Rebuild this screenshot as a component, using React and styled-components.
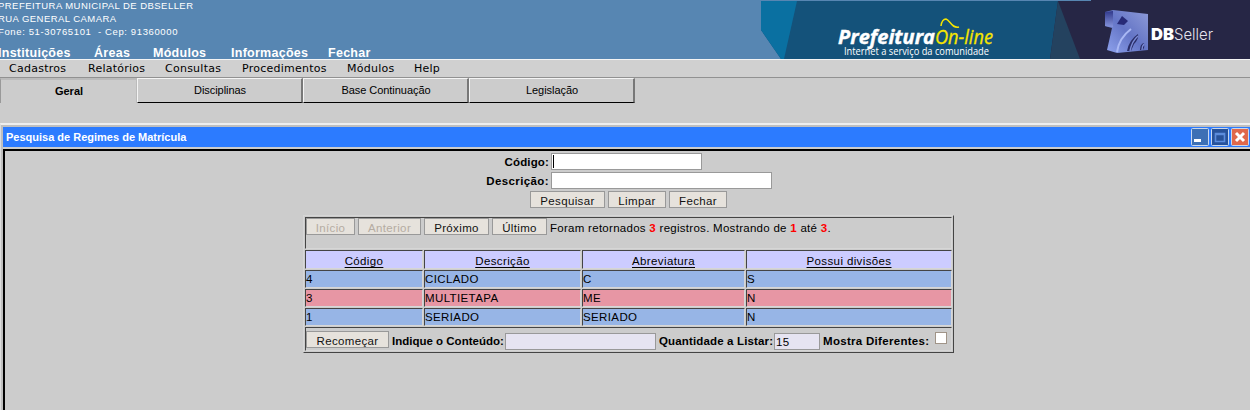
import React from 'react';
import styled, { createGlobalStyle } from 'styled-components';

const Global = createGlobalStyle`
  * { box-sizing: border-box; }
  body { margin: 0; background: #ccc; overflow: hidden; }
  body, input, button { font-family: "Liberation Sans", Arial, sans-serif; font-size: 11px; color: #000; }
`;

const Page = styled.div`
  width: 1250px;
  height: 410px;
  overflow: hidden;
  display: flex;
  flex-direction: column;
  background: #ccc;
`;

const Header = styled.header`
  height: 60px;
  flex: none;
  display: flex;
  justify-content: space-between;
  background: #5786b2;
  border-bottom: 1px solid #f4f4f4;
  color: #fff;
`;

const HeaderInfo = styled.div`
  display: flex;
  flex-direction: column;
  justify-content: space-between;
  margin-left: -2px;
`;

const Address = styled.div`
  margin-top: -1px;
  font-size: 9.5px;
  line-height: 13px;
  letter-spacing: 0.45px;
  white-space: pre;
`;

const Phone = styled.div`
  letter-spacing: 0.62px;
`;

const MainNav = styled.nav`
  display: flex;
  height: 15px;
  font-size: 12.5px;
  font-weight: bold;
  line-height: 18px;
  letter-spacing: 0.27px;
`;

const NavItem = styled.a`
  width: ${p => p.$w}px;
  white-space: nowrap;
`;

const MenuBar = styled.nav`
  height: 18px;
  flex: none;
  display: flex;
  padding-left: 9px;
  background: #d0d0d0;
  border-bottom: 1px solid #919191;
  font-family: "DejaVu Sans", sans-serif;
  letter-spacing: 0.25px;
  line-height: 17px;
`;

const Tabs = styled.div`
  display: flex;
  height: 45px;
  flex: none;
`;

const Tab = styled.div`
  width: 166px;
  height: 25px;
  padding-left: 1px;
  line-height: 23px;
  letter-spacing: -0.05px;
  text-align: center;
  border: solid;
  border-width: 1px 2px 1px 1px;
  border-color: #f4f4f4 #777 #000 #f4f4f4;
`;

const ActiveTab = styled(Tab)`
  width: 137px;
  line-height: 22px;
  letter-spacing: 0;
  font-weight: bold;
  border-width: 2px 1px 0 1px;
  border-color: #bbb #bbb #ccc #999;
`;

const Window = styled.section`
  flex: 1;
  display: flex;
  flex-direction: column;
  border-top: 2px solid #eee;
  border-left: 1px solid #ddd;
`;

const WindowFrame = styled.div`
  flex: 1;
  display: flex;
  flex-direction: column;
  border: 2px solid #bfbfbf;
  border-width: 2px 0 0 2px;
`;

const TitleBar = styled.div`
  height: 20px;
  flex: none;
  display: flex;
  justify-content: space-between;
  background: #2c7bff;
  color: #fff;
  font-weight: bold;
  line-height: 21px;
  padding: 0 1px 0 3px;
`;

const WindowButtons = styled.div`
  display: flex;
  padding-top: 1px;
  gap: 2px;
  svg { display: block; }
`;

const Content = styled.main`
  flex: 1;
  margin-top: 2px;
  border: solid #000;
  border-width: 2px 0 0 2px;
  padding-top: 2px;
`;

const FormRow = styled.div`
  display: flex;
  height: 17px;
  margin-bottom: 2px;
  align-items: stretch;
`;

const FormLabel = styled.label`
  width: 546px;
  padding-right: 2px;
  text-align: right;
  font-size: 11.5px;
  font-weight: bold;
  line-height: 18px;
  letter-spacing: ${p => p.$ls}px;
`;

const Field = styled.input`
  width: ${p => p.$w}px;
  height: 17px;
  padding: 0 1px;
  border: 1px solid #999;
  border-radius: 0;
  outline: none;
  background: ${p => p.$bg || '#fff'};
  font-size: 11.5px;
  letter-spacing: 0.3px;
`;

const FocusedField = styled.div`
  width: 151px;
  border: 1px solid #999;
  background: #fff;
  padding: 1px;
  &::before { content: ''; display: block; width: 1px; height: 13px; background: #000; }
`;

const Actions = styled.div`
  display: flex;
  gap: 3px;
  margin-left: 525px;
`;

const Button = styled.button`
  width: ${p => p.$w}px;
  height: 17px;
  padding: 4px 0 0;
  border: 1px solid #999;
  border-radius: 0;
  background: #e6e2dc;
  font-size: 11.5px;
  line-height: 11px;
  letter-spacing: 0.36px;
  white-space: nowrap;
  color: #111;
  &:disabled { color: #b5aca2; }
`;

const Grid = styled.div`
  width: 651px;
  height: 138px;
  margin: 7px 0 0 298px;
  display: grid;
  grid-template-columns: 118px 157px 163px 206px;
  grid-template-rows: 32px 19px 18px 18px 18px 24px;
  gap: 1px;
  padding: 1px;
  border: 1px solid;
  border-color: #d6d6d6 #444 #444 #d6d6d6;
`;

const Cell = styled.div`
  border: 1px solid;
  border-color: #444 #d6d6d6 #d6d6d6 #444;
  background: ${p => p.$bg};
  font-size: 11.5px;
  line-height: 17px;
  letter-spacing: 0.38px;
  white-space: nowrap;
`;

const HeadCell = styled(Cell)`
  background: #ccccff;
  text-align: center;
  line-height: 20px;
  text-decoration: underline;
  text-decoration-thickness: 1px;
  text-underline-offset: 2px;
  text-decoration-skip-ink: none;
`;

const BarCell = styled(Cell)`
  grid-column: 1 / -1;
  display: flex;
  align-items: flex-start;
`;

const Pager = styled.div`
  display: flex;
  gap: 3px;
`;

const Summary = styled.span`
  margin-left: 3px;
  line-height: 20px;
  letter-spacing: 0.28px;
  b { color: #f00; }
`;

const FooterCell = styled(BarCell)`
  padding-top: 3px;
`;

const FooterLabel = styled.label`
  flex: none;
  width: ${p => p.$w}px;
  padding-left: 3px;
  line-height: 21px;
  font-weight: bold;
  letter-spacing: ${p => p.$ls}px;
`;

const FooterField = styled(Field)`
  margin-top: 2px;
`;

const Check = styled.span`
  width: 12px;
  height: 12px;
  margin-top: 1px;
  margin-left: 4px;
  border: 1px solid #a09488;
  background: #fff;
`;

const Banner = () => (
  <svg width="490" height="59" viewBox="0 0 490 59">
    <defs>
      <linearGradient id="face" x1="0" y1="1" x2="1" y2="0">
        <stop offset="0" stopColor="#90a4ee" />
        <stop offset=".5" stopColor="#6475c6" />
        <stop offset="1" stopColor="#8e9bd8" />
      </linearGradient>
      <linearGradient id="side" x1="0" y1="0" x2="0" y2="1">
        <stop offset="0" stopColor="#30388a" />
        <stop offset="1" stopColor="#8594dc" />
      </linearGradient>
    </defs>
    <path d="M1 1H331V0H490V59H21L1 30Z" fill="#14527a" />
    <path d="M1 1H37L24 59H21L1 30Z" fill="#0a70a1" />
    <path d="M298 1L331 1V0H490V59H290Z" fill="#262645" />
    <path d="M298 1L320 59H290Z" fill="#24425f" />
    <text x="78" y="44" fill="#fff" stroke="#fff" strokeWidth=".4" fontFamily="Open Sans" fontWeight="700" fontStyle="italic" fontSize="19" textLength="97" lengthAdjust="spacingAndGlyphs">Prefeitura</text>
    <text x="175" y="44" fill="#f6e500" stroke="#f6e500" strokeWidth=".3" fontFamily="Open Sans" fontStyle="italic" fontSize="20" textLength="58" lengthAdjust="spacingAndGlyphs">On-line</text>
    <path d="M181 26Q182 19 186 19C190 20 192 29 199 27" fill="none" stroke="#f6e500" strokeWidth="1.5" />
    <text x="84" y="55" fill="#fff" fontFamily="Open Sans" fontSize="10" textLength="145" lengthAdjust="spacingAndGlyphs">Internet a serviço da comunidade</text>
    <path d="M345 12L353 10L388 14V50L357 53L347 50L352 28L345 26Z" fill="url(#face)" />
    <path d="M345 12L353 11V27L345 26Z" fill="url(#side)" />
    <path d="M362 16L368 21L364 25L357 24Z" fill="#272a76" />
    <path d="M357 52Q359 38 371 29" fill="none" stroke="#a9b8f4" strokeWidth="2" />
    <path d="M367 51Q369 40 378 34Q379 39 374 44L371 51ZM380 50Q380 44 384 43Q385 47 383 50Z" fill="#2a2e68" />
    <path d="M370 51Q372 41 378 36M382 50Q382 46 384 44" fill="none" stroke="#7b8bd6" strokeWidth="1.5" />
    <text x="391" y="40" fill="#fff" fontFamily="Inter" fontWeight="900" fontSize="16.5" textLength="23" lengthAdjust="spacingAndGlyphs">DB</text>
    <text x="414" y="40" fill="#e4e4ee" fontFamily="Inter" fontWeight="300" fontSize="16.5" textLength="39" lengthAdjust="spacingAndGlyphs">Seller</text>
  </svg>
);

const WinIcon = ({ fill, children }) => (
  <svg width="18" height="18" viewBox="0 0 18 18">
    <rect x=".5" y=".5" width="17" height="17" rx="1" fill={fill} stroke="#c9d8ee" />
    {children}
  </svg>
);

const columns = ['Código', 'Descrição', 'Abreviatura', 'Possui divisões'];
const rows = [
  ['4', 'CICLADO', 'C', 'S'],
  ['3', 'MULTIETAPA', 'ME', 'N'],
  ['1', 'SERIADO', 'SERIADO', 'N'],
];
const mainNav = [['Instituições', 96], ['Áreas', 59], ['Módulos', 78], ['Informações', 97], ['Fechar', 50]];
const menu = [['Cadastros', 79], ['Relatórios', 77], ['Consultas', 77], ['Procedimentos', 105], ['Módulos', 67], ['Help', 40]];

export default function App() {
  return (
    <Page>
      <Global />
      <Header>
        <HeaderInfo>
          <Address>
            <div>PREFEITURA MUNICIPAL DE DBSELLER</div>
            <div>RUA GENERAL CAMARA</div>
            <Phone>{'Fone: 51-30765101  - Cep: 91360000'}</Phone>
          </Address>
          <MainNav>{mainNav.map(([t, w]) => <NavItem key={t} $w={w}>{t}</NavItem>)}</MainNav>
        </HeaderInfo>
        <Banner />
      </Header>
      <MenuBar>{menu.map(([t, w]) => <NavItem key={t} $w={w}>{t}</NavItem>)}</MenuBar>
      <Tabs>
        <ActiveTab>Geral</ActiveTab>
        <Tab>Disciplinas</Tab>
        <Tab>Base Continuação</Tab>
        <Tab>Legislação</Tab>
      </Tabs>
      <Window>
        <WindowFrame>
          <TitleBar>
            Pesquisa de Regimes de Matrícula
            <WindowButtons>
              <WinIcon fill="#3d70b5"><rect x="3" y="11" width="7" height="3" fill="#fff" /></WinIcon>
              <WinIcon fill="#28529a"><path d="M4.5 5.5H13.5V13.5H4.5ZM4.5 6.5H13.5" fill="none" stroke="#5c8cdc" strokeWidth="1.6" /></WinIcon>
              <WinIcon fill="#e0694c"><path d="M5 5L13 13M13 5L5 13" stroke="#fff" strokeWidth="3" /></WinIcon>
            </WindowButtons>
          </TitleBar>
          <Content>
            <FormRow><FormLabel $ls={0.15}>Código:</FormLabel><FocusedField /></FormRow>
            <FormRow><FormLabel $ls={0.4}>Descrição:</FormLabel><Field $w={221} /></FormRow>
            <Actions>
              <Button $w={75}>Pesquisar</Button>
              <Button $w={58}>Limpar</Button>
              <Button $w={58}>Fechar</Button>
            </Actions>
            <Grid>
              <BarCell>
                <Pager>
                  <Button $w={49} disabled>Início</Button>
                  <Button $w={63} disabled>Anterior</Button>
                  <Button $w={65}>Próximo</Button>
                  <Button $w={55}>Último</Button>
                </Pager>
                <Summary>Foram retornados <b>3</b> registros. Mostrando de <b>1</b> até <b>3</b>.</Summary>
              </BarCell>
              {columns.map(c => <HeadCell key={c}>{c}</HeadCell>)}
              {rows.map((r, i) => r.map((v, j) => (
                <Cell key={`${i}-${j}`} $bg={i % 2 ? '#e796a4' : '#97b5e6'}>{v}</Cell>
              )))}
              <FooterCell>
                <Button $w={83}>Recomeçar</Button>
                <FooterLabel $w={116} $ls={0}>Indique o Conteúdo:</FooterLabel>
                <FooterField $w={151} $bg="#e6e4f1" />
                <FooterLabel $w={118} $ls={0.15}>Quantidade a Listar:</FooterLabel>
                <FooterField $w={46} $bg="#e6e4f1" defaultValue="15" />
                <FooterLabel $w={111} $ls={0.3}>Mostra Diferentes:</FooterLabel>
                <Check />
              </FooterCell>
            </Grid>
          </Content>
        </WindowFrame>
      </Window>
    </Page>
  );
}
